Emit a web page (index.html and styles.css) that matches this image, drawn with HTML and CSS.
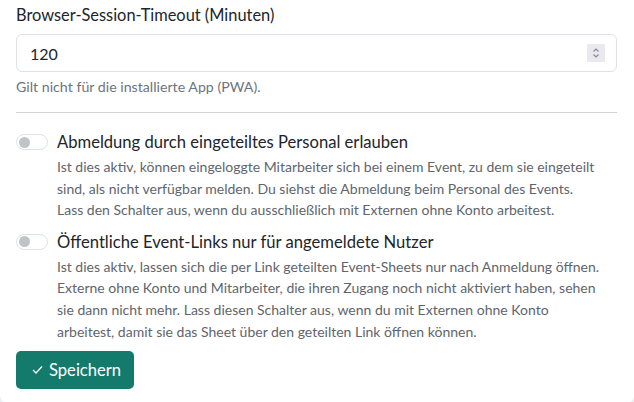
FILE: index.html
```html
<!DOCTYPE html>
<html lang="de">
<head>
<meta charset="utf-8">
<title>Einstellungen</title>
<link rel="stylesheet" href="styles.css">
</head>
<body>
<div class="card">
  <label class="field-label" for="timeout">Browser-Session-Timeout (Minuten)</label>
  <div class="input" id="timeout">
    <span class="input-value">120</span>
    <span class="spinner">
      <svg width="18" height="18" viewBox="0 0 18 18" aria-hidden="true">
        <path d="M6.5 7.5 L9 5 L11.5 7.5" fill="none" stroke="#8a8a96" stroke-width="1.2"/>
        <path d="M6.5 10.5 L9 13 L11.5 10.5" fill="none" stroke="#8a8a96" stroke-width="1.2"/>
      </svg>
    </span>
  </div>
  <p class="help">Gilt nicht für die installierte App (PWA).</p>
  <hr class="divider">

  <div class="switch-row">
    <span class="switch"><span class="knob"></span></span>
    <div class="switch-body">
      <div class="switch-title">Abmeldung durch eingeteiltes Personal erlauben</div>
      <p class="switch-desc">Ist dies aktiv, können eingeloggte Mitarbeiter sich bei einem Event, zu dem sie eingeteilt<br>sind, als nicht verfügbar melden. Du siehst die Abmeldung beim Personal des Events.<br>Lass den Schalter aus, wenn du ausschließlich mit Externen ohne Konto arbeitest.</p>
    </div>
  </div>

  <div class="switch-row">
    <span class="switch"><span class="knob"></span></span>
    <div class="switch-body">
      <div class="switch-title">Öffentliche Event-Links nur für angemeldete Nutzer</div>
      <p class="switch-desc">Ist dies aktiv, lassen sich die per Link geteilten Event-Sheets nur nach Anmeldung öffnen.<br>Externe ohne Konto und Mitarbeiter, die ihren Zugang noch nicht aktiviert haben, sehen<br>sie dann nicht mehr. Lass diesen Schalter aus, wenn du mit Externen ohne Konto<br>arbeitest, damit sie das Sheet über den geteilten Link öffnen können.</p>
    </div>
  </div>

  <button class="btn-save" type="button">
    <svg width="11" height="10" viewBox="0 0 11 10" aria-hidden="true"><path d="M1 5 L4 8 L10 1.5" fill="none" stroke="#fff" stroke-width="1.3"/></svg>
    <span>Speichern</span>
  </button>
</div>
</body>
</html>
```
FILE: styles.css
```css
html, body {
  margin: 0;
  padding: 0;
  background: #eceef1;
}
body {
  font-family: Lato, "Noto Sans", sans-serif;
  color: #212529;
}
.card {
  background: #fff;
  height: 402px;
  box-sizing: border-box;
  padding: 3px 17px 0 16px;
  border-radius: 0 0 6px 6px;
}
.field-label {
  display: block;
  font-size: 16.4px;
  line-height: 24px;
  margin-bottom: 7px;
}
.input {
  display: flex;
  align-items: center;
  justify-content: space-between;
  height: 38px;
  box-sizing: border-box;
  border: 1px solid #dee2e6;
  border-radius: 6px;
  padding: 0 11px 0 13px;
  font-size: 16px;
}
.spinner {
  display: flex;
  width: 18px;
  height: 18px;
  background: #e9e9ef;
}
.help {
  margin: 4px 0 0;
  font-size: 14.2px;
  line-height: 21px;
  color: #6c757d;
}
.divider {
  border: 0;
  border-top: 1px solid #d3d3d6;
  margin: 15px 0 17px;
}
.switch-row {
  display: flex;
  gap: 9px;
  margin-bottom: 9px;
}
.switch {
  flex: none;
  display: flex;
  align-items: center;
  width: 32px;
  height: 16px;
  box-sizing: border-box;
  margin-top: 4px;
  border: 1px solid #dee2e6;
  border-radius: 8px;
  padding-left: 2px;
}
.knob {
  width: 11px;
  height: 11px;
  border-radius: 50%;
  background: #c2c3c6;
}
.switch-title {
  font-size: 16.6px;
  line-height: 24px;
}
.switch-desc {
  margin: 2px 0 0;
  font-size: 14px;
  line-height: 21.6px;
  color: #5f656b;
  white-space: nowrap;
}
.btn-save {
  display: flex;
  align-items: center;
  gap: 6px;
  height: 38px;
  padding: 0 13px 0 16px;
  margin-top: 5px;
  border: 0;
  border-radius: 5px;
  background: #137a6c;
  color: #fff;
  font-family: inherit;
  font-size: 16.6px;
}
```
